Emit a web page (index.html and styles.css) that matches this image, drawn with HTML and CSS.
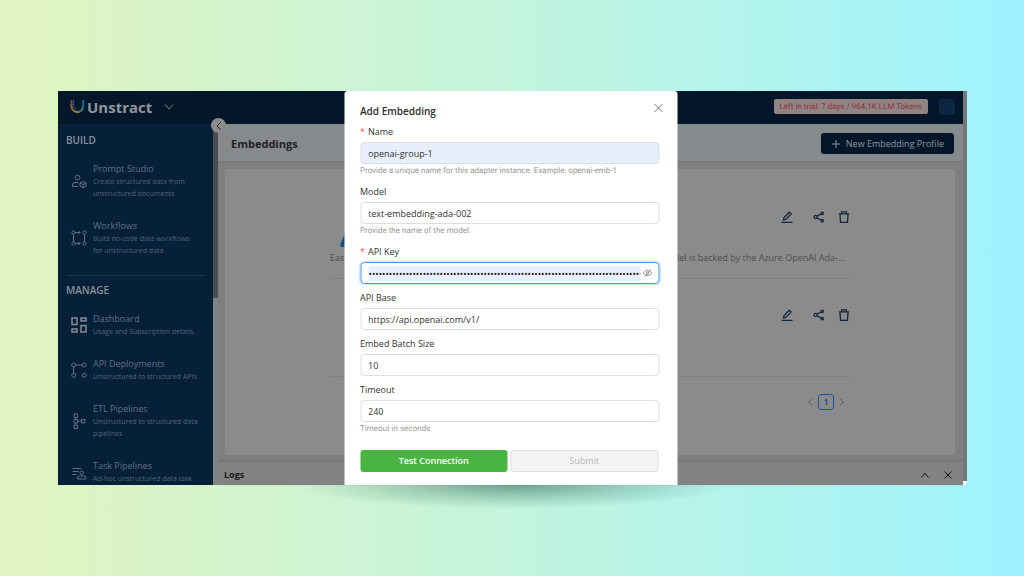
FILE: index.html
```html
<!DOCTYPE html>
<html lang="en">
<head>
<meta charset="utf-8">
<title>Unstract - Embeddings</title>
<link rel="stylesheet" href="styles.css">
</head>
<body>
<svg class="sprite" aria-hidden="true">
  <symbol id="edit" viewBox="0 0 12 12"><path d="M.5 11.4h11M2.5 8.9l.4-2.2L8.3 1.2l1.9 1.9-5.5 5.4z"/></symbol>
  <symbol id="share" viewBox="0 0 12 12"><circle cx="2.6" cy="6" r="1.6"/><circle cx="9.3" cy="2.3" r="1.2"/><circle cx="9.3" cy="9.7" r="1.2"/><path d="M4 5.2l4.2-2.3M4 6.8l4.2 2.3"/></symbol>
  <symbol id="trash" viewBox="0 0 12 12"><path d="M.8 2.8h10.4M3.6 2.6V.9h4.8v1.7M2 3l.5 8.3h7L10 3"/></symbol>
</svg>
<div class="app">
  <header class="topbar">
    <svg class="logo" viewBox="0 0 15 15"><path d="M1.500 1v5" stroke="#8c3b35"/><path d="M1.500 5v2a6 6 0 0 0 3 5.200" stroke="#98622a"/><path d="M4 11.900a6 6 0 0 0 5.500.8" stroke="#94812a"/><path d="M9 12.800A6 6 0 0 0 13 8" stroke="#327553"/><path d="M13.200 1v5q0 1.500-.3 2.500" stroke="#146a94"/><path d="M3.600 1v5.500a3.800 3.800 0 0 0 3 3.700" stroke="#15608b" stroke-width="1"/></svg>
    <span class="brand">Unstract</span>
    <svg class="caret" viewBox="0 0 10 8"><path d="M1 1.500l4 4.500 4-4.500"/></svg>
    <span class="trial">Left in trial: 7 days / 964.1K LLM Tokens</span>
    <span class="avatar"></span>
  </header>
  <div class="body">
    <nav class="sidebar">
      <h2>BUILD</h2>
      <ul>
        <li><svg viewBox="0 0 16 16"><circle cx="6.500" cy="4.500" r="2.400"/><path d="M7.500 9.500H4Q1.500 9.500 1.500 12v1.500H7M9 10l3-1.500L15 10v3.200l-3 1.500-3-1.500zM9 10l3 1.500 3-1.500M12 11.500v3"/></svg><a href="#">Prompt Studio<small>Create structured data from unstructured documents</small></a></li>
        <li><svg viewBox="0 0 16 16"><circle cx="2.500" cy="2.500" r="1.600"/><circle cx="13.500" cy="2.500" r="1.600"/><circle cx="2.500" cy="13.500" r="1.600"/><circle cx="13.500" cy="13.500" r="1.600"/><path d="M2.500 4v8M13.500 4v8M4 2.500h5M7.500 1l1.500 1.500L7.500 4M4 13.500h5M7.500 12L9 13.500 7.500 15"/></svg><a href="#">Workflows<small>Build no-code data workflows for unstructured data</small></a></li>
      </ul>
      <hr>
      <h2>MANAGE</h2>
      <ul>
        <li><svg class="strong" viewBox="0 0 16 16"><path d="M1 1h5v6.500H1zM10 1h5v3h-5zM1 12h5v3H1zM10 8.500h5V15h-5z"/></svg><a href="#">Dashboard<small>Usage and Subscription details.</small></a></li>
        <li><svg viewBox="0 0 16 16"><circle cx="2.700" cy="3" r="2"/><circle cx="13.300" cy="3" r="2"/><circle cx="2.700" cy="13.300" r="2"/><circle cx="13.300" cy="13.300" r="2"/><path d="M4.700 3h6.600M2.700 5v6.300"/></svg><a href="#">API Deployments<small>Unstructured to structured APIs</small></a></li>
        <li><svg viewBox="0 0 16 16"><path d="M3 1h3.500v3.500H3zM3 6.500h3.500V10H3zM3 12h3.500v3.500H3zM4.700 4.500v2M4.700 10v2M6.500 8.200h4M10.500 6.500H14V10h-3.500z"/></svg><a href="#">ETL Pipelines<small>Unstructured to structured data pipelines</small></a></li>
        <li><svg viewBox="0 0 16 16"><path d="M1.500 4.500h9M1.500 7.500h6M1.500 10.500h4M6.500 15v-1q0-2 2-2H13q2 0 2 2v1z"/><circle cx="10.700" cy="8.700" r="1.800"/></svg><a href="#">Task Pipelines<small>Ad-hoc unstructured data task</small></a></li>
      </ul>
    </nav>
    <div class="rail"><span class="thumb"></span>
      <button class="collapse" aria-label="Collapse menu"><svg viewBox="0 0 10 10"><path d="M6.500 1.500L3 5l3.500 3.500"/></svg></button>
    </div>
    <main class="main">
      <div class="subhead">
        <h1>Embeddings</h1>
        <button class="new"><svg viewBox="0 0 10 10"><path d="M5 1v8M1 5h8"/></svg>New Embedding Profile</button>
      </div>
      <section class="card">
        <div class="list">
          <article class="row">
            <div class="actions">
              <button aria-label="Edit"><svg><use href="#edit"/></svg></button>
              <button aria-label="Share"><svg><use href="#share"/></svg></button>
              <button aria-label="Delete"><svg><use href="#trash"/></svg></button>
            </div>
            <svg class="azure" viewBox="0 0 10 14"><path d="M5 0h5v14H1q-1-1-.500-3z"/></svg>
            <div class="desc"><span>Easily</span><span>model is backed by the Azure OpenAI Ada-...</span></div>
          </article>
          <article class="row">
            <div class="actions">
              <button aria-label="Edit"><svg><use href="#edit"/></svg></button>
              <button aria-label="Share"><svg><use href="#share"/></svg></button>
              <button aria-label="Delete"><svg><use href="#trash"/></svg></button>
            </div>
          </article>
          <div class="pager">
            <button aria-label="Previous"><svg viewBox="0 0 6 8"><path d="M5 1L1.500 4 5 7"/></svg></button>
            <button class="current">1</button>
            <button aria-label="Next"><svg viewBox="0 0 6 8"><path d="M1 1l3.500 3L1 7"/></svg></button>
          </div>
        </div>
      </section>
      <footer class="logs">
        <strong>Logs</strong>
        <button aria-label="Expand"><svg viewBox="0 0 10 10"><path d="M1.500 7.500L5 3l3.500 4.500"/></svg></button>
        <button aria-label="Close logs"><svg viewBox="0 0 10 10"><path d="M1.500 1.500l7 7M8.500 1.500l-7 7"/></svg></button>
      </footer>
    </main>
    <div class="gutter"></div>
  </div>
  <div class="shadow"></div>
  <form class="modal" role="dialog" aria-labelledby="title">
    <button type="button" class="close" aria-label="Close"><svg viewBox="0 0 10 10"><path d="M1 1l8 8M9 1L1 9"/></svg></button>
    <h2 id="title">Add Embedding</h2>
    <div class="fields">
      <div><label for="name"><i>*</i>Name</label><input id="name" class="filled" type="text" value="openai-group-1"><p>Provide a unique name for this adapter instance. Example: openai-emb-1</p></div>
      <div><label for="model">Model</label><input id="model" type="text" value="text-embedding-ada-002"><p>Provide the name of the model.</p></div>
      <div><label for="key"><i>*</i>API Key</label><div class="secret"><input id="key" type="password" value="0000000000000000000000000000000000000000000000000000000000000000000000000000000000000000000000000000"><button type="button" aria-label="Show key"><svg viewBox="0 0 12 12"><path d="M1 6q5-7 10 0-5 7-10 0zM10 1.500L2.500 10.500"/><circle cx="6" cy="6" r="1.600"/></svg></button></div></div>
      <div><label for="base">API Base</label><input id="base" type="text" value="https://api.openai.com/v1/"></div>
      <div><label for="batch">Embed Batch Size</label><input id="batch" type="text" value="10"></div>
      <div><label for="timeout">Timeout</label><input id="timeout" type="text" value="240"><p>Timeout in seconds</p></div>
    </div>
    <div class="buttons">
      <button type="button" class="test">Test Connection</button>
      <button type="submit" class="submit" disabled>Submit</button>
    </div>
  </form>
</div>
</body>
</html>
```
FILE: styles.css
```css
* { box-sizing: border-box; margin: 0; padding: 0; }
body {
  height: 100vh;
  padding: 91px 57px 91px 58px;
  background: linear-gradient(90deg, #e2f4c0, #c3f4dd 50%, #9ef3ff);
  font: 9px/14px "Open Sans", "Noto Sans", sans-serif;
  color: #333;
}
button, input { font: inherit; color: inherit; }
button { border: 0; background: none; display: flex; align-items: center; justify-content: center; }
svg { display: block; fill: none; stroke: currentColor; }
.sprite { width: 0; height: 0; position: absolute; }

.app { position: relative; height: 100%; display: flex; flex-direction: column; }
.topbar {
  flex: 0 0 33px; margin-right: 4px; padding: 0 8px 2px 12px;
  display: flex; align-items: center; background: #04172a;
}
.logo { width: 15px; height: 15px; stroke-width: 2; }
.brand { margin-left: 2px; font-size: 15px; line-height: 30px; font-weight: 700; color: #90969c; }
.caret { width: 10px; height: 8px; margin-left: 12px; color: #7d858d; }
.trial {
  margin-left: auto; padding: 0 5px; border: 1px solid #9d7f7e; border-radius: 2px;
  background: #8e8483; color: #93333a; font: 8px/13px Roboto, sans-serif; text-rendering: geometricPrecision;
}
.avatar { width: 16px; height: 16px; margin-left: 11px; border-radius: 2px; background: #0b2743; }

.body { flex: 1; min-height: 0; display: flex; }
.sidebar { flex: 0 0 155px; overflow: hidden; padding: 8px 8px 0; background: #07203a; color: #5f7081; }
.sidebar h2 { font-size: 10px; line-height: 16px; font-weight: 600; color: #8a9198; }
.sidebar ul { list-style: none; display: flex; flex-direction: column; gap: 19px; padding: 14px 0 18px 5px; }
.sidebar li { display: flex; align-items: center; gap: 6px; }
.sidebar li svg { flex: 0 0 16px; height: 16px; }
.sidebar .strong { color: #858b92; stroke-width: 1.5; }
.sidebar a { color: inherit; text-decoration: none; white-space: nowrap; }
.sidebar small { display: block; width: 106px; font-size: 7px; line-height: 12px; white-space: normal; color: #526375; }
.sidebar hr { border: 0; border-top: 1px solid #1b3550; margin-bottom: 6px; }

.rail { position: relative; flex: 0 0 5px; background: #828282; }
.thumb { display: block; height: 174px; background: #4c4c4c; }
.collapse {
  position: absolute; top: -6px; left: -2px; width: 15px; height: 15px;
  border-radius: 50%; background: #8b8b8b; color: #222;
}
.collapse svg { width: 10px; height: 10px; }

.main { flex: 1; min-width: 0; display: flex; flex-direction: column; background: #7f7f7f; }
.subhead {
  flex: 0 0 37px; padding: 2px 9px 0 13px; display: flex; align-items: center; justify-content: space-between;
  background: #868a8d; box-shadow: 0 1px 2px #747878;
}
.subhead h1 { font-size: 11px; font-weight: 700; color: #1f2123; }
.new { height: 21px; padding: 0 10px; gap: 5px; border-radius: 3px; background: #04172a; color: #8f979e; }
.new svg { width: 10px; height: 10px; }
.card { flex: 1; margin: 8px 8px 7px 7px; padding: 12px 105px 0; background: #8b8b8b; }
.row { height: 98px; padding-top: 30px; border-bottom: 1px solid #828282; }
.actions { display: flex; justify-content: flex-end; color: #13283d; stroke-width: 1.3; }
.actions button { margin-left: 13px; }
.actions button:nth-child(2) { margin-left: 20px; }
.actions svg { width: 12px; height: 12px; }
.azure { width: 10px; height: 14px; margin: 10px 0 0 10px; fill: #0a4f92; stroke: none; }
.desc { display: flex; justify-content: space-between; padding: 4px 5px 0 0; color: #4f4f4f; }
.pager { display: flex; justify-content: flex-end; align-items: center; gap: 5px; padding: 17px 5px 0; color: #5f5f5f; }
.pager svg { width: 6px; height: 8px; }
.current { width: 16px; height: 16px; border: 1px solid #1f56a0; border-radius: 3px; color: #124494; font-weight: 600; }
.logs {
  flex: 0 0 23px; padding: 2px 10px 0 6px; display: flex; align-items: center; gap: 13px;
  background: #838383; box-shadow: 0 -1px 2px #717171; color: #161616;
}
.logs strong { margin-right: auto; }
.logs svg { width: 10px; height: 10px; }
.gutter { flex: 0 0 4px; margin-top: -33px; background: #777; border-bottom: 4px solid #f4ffff; }

.shadow {
  position: absolute; left: 50%; bottom: -24px; width: 430px; height: 48px; transform: translateX(-50%);
  background: radial-gradient(closest-side, rgba(20, 80, 65, .5), rgba(20, 80, 65, .2) 55%, transparent);
  clip-path: inset(24px 0 0);
}
.modal {
  position: absolute; top: 0; bottom: 0; left: calc(50% - 2px); width: 333px; transform: translateX(-50%);
  padding: 12px 18px 13px 16px; border-radius: 3px 3px 0 0; background: #fff;
}
.modal h2 { font-size: 10px; line-height: 16px; font-weight: 600; color: #2b2b2b; }
.close { position: absolute; top: 12px; right: 14px; color: #777; }
.close svg { width: 10px; height: 10px; }
.fields { display: flex; flex-direction: column; gap: 7px; padding-top: 6px; }
.fields label { display: block; padding-bottom: 3px; color: #333; }
.fields i { margin-right: 3px; font-style: normal; color: #ff4d4f; }
.fields input { display: block; width: 100%; height: 22px; padding: 0 7px; border: 1px solid #dedede; border-radius: 4px; background: #fff; outline: 0; }
.fields .filled { background: #e8eefc; }
.fields p { font: 8px/14px Roboto, sans-serif; color: #999; text-rendering: geometricPrecision; }
.secret { display: flex; align-items: center; height: 22px; padding: 0 6px 0 7px; border: 1px solid #4d97ff; border-radius: 4px; box-shadow: 0 0 1px 1px #cfe2ff; }
.fields .secret input { flex: 1; min-width: 0; height: 15px; padding: 0; border: 0; border-radius: 0; background: #e8eefc; color: #111; }
.secret svg { width: 10px; height: 10px; margin-left: 2px; color: #888; }
.buttons { display: grid; grid-template-columns: 1fr 1fr; gap: 3px; padding: 14px 1px 0 0; }
.buttons button { height: 22px; border-radius: 3px; }
.test { background: #49b442; color: #fff; font-weight: 600; }
.buttons .submit { border: 1px solid #dedede; background: #f4f4f4; color: #b8b8b8; }
```
